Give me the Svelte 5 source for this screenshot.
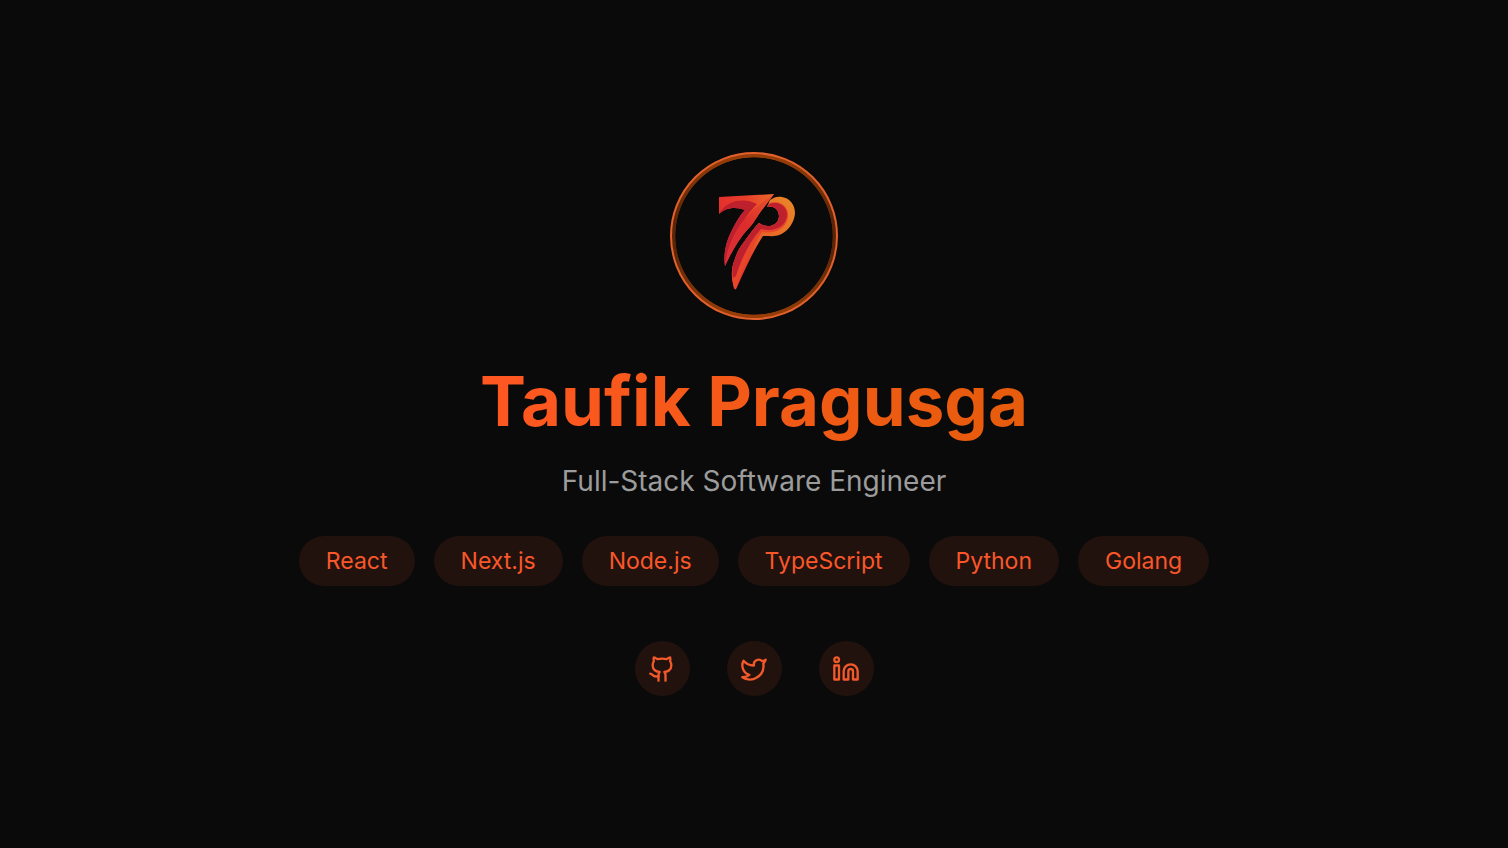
<script>
  const skills = ['React', 'Next.js', 'Node.js', 'TypeScript', 'Python', 'Golang'];

  const links = [
    {
      name: 'GitHub',
      paths: [
        'M15 22v-4a4.800 4.800 0 0 0-1-3.500c3 0 6-2 6-5.500.080-1.250-.270-2.480-1-3.500.280-1.150.280-2.350 0-3.500 0 0-1 0-3 1.500-2.640-.500-5.360-.500-8 0C6 2 5 2 5 2c-.300 1.150-.300 2.350 0 3.500A5.403 5.403 0 0 0 4 9c0 3.500 3 5.500 6 5.500-.390.490-.680 1.050-.850 1.650-.170.600-.220 1.230-.150 1.850v4',
        'M9 18c-4.510 2-5-2-7-2'
      ]
    },
    {
      name: 'Twitter',
      paths: [
        'M22 4s-.700 2.100-2 3.400c1.600 10-9.400 17.300-18 11.600 2.200.100 4.400-.600 6-2C3 15.500.500 9.600 3 5c2.200 2.600 5.600 4.100 9 4-.900-4.200 4-6.600 7-3.800 1.100 0 3-1.200 3-1.200z'
      ]
    },
    {
      name: 'LinkedIn',
      paths: [
        'M16 8a6 6 0 0 1 6 6v7h-4v-7a2 2 0 0 0-4 0v7h-4v-7a6 6 0 0 1 6-6z',
        'M2 9h4v12H2z',
        'M6 4a2 2 0 1 1-4 0a2 2 0 1 1 4 0z'
      ]
    }
  ];
</script>

<main>
  <div class="avatar">
    <svg class="logo" viewBox="0 -6 98 114" role="img" aria-label="TP logo">
      <defs>
        <linearGradient id="bar" x1="0" x2="1">
          <stop offset="0" stop-color="#e5302c" />
          <stop offset="0.500" stop-color="#e83f2a" />
          <stop offset="1" stop-color="#ea6a28" />
        </linearGradient>
        <linearGradient id="bowl" x1="0.900" y1="0" x2="0.200" y2="1">
          <stop offset="0" stop-color="#e88428" />
          <stop offset="0.450" stop-color="#e86628" />
          <stop offset="0.700" stop-color="#e8452a" />
          <stop offset="1" stop-color="#e0302c" />
        </linearGradient>
        <linearGradient id="leg" x1="0.900" y1="0" x2="0.100" y2="1">
          <stop offset="0" stop-color="#e8502a" />
          <stop offset="0.500" stop-color="#dc2c2c" />
          <stop offset="1" stop-color="#d8303a" />
        </linearGradient>
      </defs>
      <path fill="url(#bar)" d="M14 12 L69 9 C64 16 59 22 54 29 C50 35 48 39 43 44 C33 55 26 68 20 81 C18 69 21 56 27 45 C31 37 35 30 40 25 C30 21 20 23 14 29Z" />
      <path fill="#bf202d" d="M14 29 C21 16 37 12 52 19 C45 26 38 35 33 46 C27 59 24 68 20 81 C18 69 21 56 27 45 C31 37 35 30 40 25 C30 21 20 23 14 29Z" />
      <path fill="url(#leg)" d="M69 9 C64 16 59 22 54 29 C50 35 48 39 43 44 C33 55 26 68 20 81 C21 67 27 52 35 40 C43 29 55 18 69 9Z" />
      <path fill="url(#bowl)" d="M65 15 C69 12 73 11 77 12 C85 13 90 20 90 28 C89 42 77 53 64 51 L58 51 C53 59 49 66 45 74 C39 86 35 96 31 104 Q30 105 29 103 C26 92 26 83 30 74 C32 67 35 62 39 57 C44 50 49 43 54 38 C62 44 74 41 74 31 C74 24 68 20 62 22Z" />
      <path fill="#e8452a" d="M65 18 C76 15 84 22 83 32 C81 44 70 49 57 47 C46 61 40 80 31 104 Q30 105 29 103 C26 92 26 83 30 74 C32 67 35 62 39 57 C44 50 49 43 54 38 C62 44 74 41 74 31 C74 24 68 20 62 22Z" />
      <path fill="#bf202d" d="M64 19 C74 15 83 22 82 31 C80 43 68 47 56 44 C44 57 36 75 31 91 L28 93 C27 86 27 80 30 74 C32 67 35 62 39 57 C44 50 49 43 54 38 C62 44 74 41 74 31 C74 24 68 20 62 22Z" />
    </svg>
  </div>
  <h1>Taufik Pragusga</h1>
  <p>Full-Stack Software Engineer</p>
  <ul class="skills">
    {#each skills as skill}
      <li>{skill}</li>
    {/each}
  </ul>
  <nav aria-label="Social links">
    {#each links as link}
      <a href="#{link.name.toLowerCase()}" aria-label={link.name}>
        <svg viewBox="0 0 24 24" aria-hidden="true">
          {#each link.paths as d}
            <path {d} />
          {/each}
        </svg>
      </a>
    {/each}
  </nav>
</main>

<style>
  :global(body) {
    margin: 0;
    background: #0a0a0a;
  }

  main {
    box-sizing: border-box;
    min-height: 100vh;
    padding: 24px;
    display: flex;
    flex-direction: column;
    align-items: center;
    justify-content: center;
    font-family: Inter, sans-serif;
    color: #f9572a;
  }

  .avatar {
    box-sizing: border-box;
    width: 168px;
    height: 168px;
    padding: 3px;
    border: 2px solid #e2602c;
    border-radius: 50%;
    background:
      radial-gradient(closest-side, #0a0a0a 99%, transparent 100%) content-box,
      linear-gradient(#9a3f08, #5a2506 40%, #5a2506 60%, #9a3f08) border-box;
    display: flex;
    align-items: center;
    justify-content: center;
  }

  .logo {
    width: 98px;
    height: 114px;
  }

  h1 {
    margin: 41px 0 0;
    font-size: 69px;
    line-height: 80px;
    font-weight: 700;
    text-align: center;
    color: transparent;
    background: linear-gradient(to right, #ff5722, #e65c0c);
    background-clip: text;
  }

  p {
    margin: 22px 0 0;
    font-size: 28px;
    line-height: 36px;
    text-align: center;
    color: #9c9c9c;
  }

  .skills {
    margin: 37px 0 0;
    padding: 0;
    list-style: none;
    display: flex;
    flex-wrap: wrap;
    justify-content: center;
    gap: 19px;
  }

  li {
    padding: 9px 27px;
    border-radius: 25px;
    background: #22120d;
    font-size: 23px;
    line-height: 32px;
  }

  nav {
    margin-top: 55px;
    display: flex;
    gap: 37px;
  }

  a {
    width: 55px;
    height: 55px;
    border-radius: 50%;
    background: #22120d;
    color: #f2592b;
    display: flex;
    align-items: center;
    justify-content: center;
  }

  a svg {
    width: 28px;
    height: 28px;
    fill: none;
    stroke: currentColor;
    stroke-width: 2;
    stroke-linecap: round;
    stroke-linejoin: round;
  }
</style>
